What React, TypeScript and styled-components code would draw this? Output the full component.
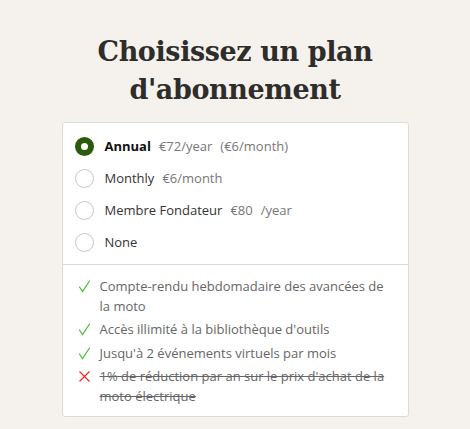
import styled, { createGlobalStyle } from "styled-components";

const plans = [
  { id: "annual", name: "Annual", price: "€72/year", extra: "(€6/month)" },
  { id: "monthly", name: "Monthly", price: "€6/month" },
  { id: "founder", name: "Membre Fondateur", price: "€80", extra: "/year" },
  { id: "none", name: "None" },
];

const features = [
  { ok: true, text: "Compte-rendu hebdomadaire des avancées de la moto" },
  { ok: true, text: "Accès illimité à la bibliothèque d'outils" },
  { ok: true, text: "Jusqu'à 2 événements virtuels par mois" },
  { ok: false, text: "1% de réduction par an sur le prix d'achat de la moto électrique" },
];

function CheckIcon() {
  return (
    <svg width="13" height="13" viewBox="0 0 13 13">
      <path d="M1.5 7 L4.5 11.5 L11.5 1" fill="none" stroke="#4cc43a" strokeWidth="1.3" strokeLinecap="round" />
    </svg>
  );
}

function CrossIcon() {
  return (
    <svg width="13" height="13" viewBox="0 0 13 13">
      <path d="M1.5 1.5 L11.5 11.5 M11.5 1.5 L1.5 11.5" fill="none" stroke="#ee2a2a" strokeWidth="1.3" />
    </svg>
  );
}

export default function App() {
  const selected = "annual";
  return (
    <>
      <GlobalStyle />
      <Page>
        <Title>Choisissez un plan d'abonnement</Title>
        <Card>
          <PlanList>
            {plans.map((p) => (
              <PlanRow key={p.id}>
                <Radio $checked={p.id === selected} />
                <PlanName $checked={p.id === selected}>{p.name}</PlanName>
                {p.price && <Price>{p.price}</Price>}
                {p.extra && <Price>{p.extra}</Price>}
              </PlanRow>
            ))}
          </PlanList>
          <Features>
            {features.map((f) => (
              <Feature key={f.text}>
                <Mark>{f.ok ? <CheckIcon /> : <CrossIcon />}</Mark>
                <FeatureText $ok={f.ok}>{f.text}</FeatureText>
              </Feature>
            ))}
          </Features>
        </Card>
      </Page>
    </>
  );
}

const GlobalStyle = createGlobalStyle`
  body {
    margin: 0;
    background: #f5f2ee;
    font-family: "Open Sans", "Noto Sans", sans-serif;
  }
`;

const Page = styled.div`
  width: 347px;
  margin: 0 auto;
  padding-top: 33px;
`;

const Title = styled.h1`
  margin: 0 0 13px;
  padding: 0 20px;
  text-align: center;
  font-family: "DejaVu Serif", "Liberation Serif", serif;
  font-size: 27px;
  line-height: 38px;
  font-weight: bold;
  color: #2f2d2a;
  letter-spacing: -0.4px;
`;

const Card = styled.div`
  background: #fff;
  border: 1px solid #dedbd6;
  border-radius: 3px;
`;

const PlanList = styled.div`
  display: flex;
  flex-direction: column;
  padding: 7px 0 6px 12px;
  border-bottom: 1px solid #dedbd6;
`;

const PlanRow = styled.div`
  display: flex;
  align-items: center;
  gap: 8px;
  height: 32px;
`;

const Radio = styled.span<{ $checked: boolean }>`
  box-sizing: border-box;
  width: 19px;
  height: 19px;
  border-radius: 50%;
  margin-right: 3px;
  border: ${(p) => (p.$checked ? "6px solid #2c5a0d" : "1px solid #c6c6c6")};
  background: #fff;
`;

const PlanName = styled.span<{ $checked: boolean }>`
  font-size: 13px;
  color: ${(p) => (p.$checked ? "#111" : "#333")};
  font-weight: ${(p) => (p.$checked ? 700 : 400)};
`;

const Price = styled.span`
  font-size: 13px;
  color: #777;
`;

const Features = styled.ul`
  list-style: none;
  margin: 0;
  padding: 12px 20px 10px 15px;
  display: flex;
  flex-direction: column;
  gap: 4px;
`;

const Feature = styled.li`
  display: flex;
  gap: 9px;
`;

const Mark = styled.span`
  width: 13px;
  flex: none;
  height: 19.5px;
  display: flex;
  align-items: center;
`;

const FeatureText = styled.span<{ $ok: boolean }>`
  font-size: 13px;
  line-height: 19.5px;
  color: #666;
  text-decoration: ${(p) => (p.$ok ? "none" : "line-through")};
`;
